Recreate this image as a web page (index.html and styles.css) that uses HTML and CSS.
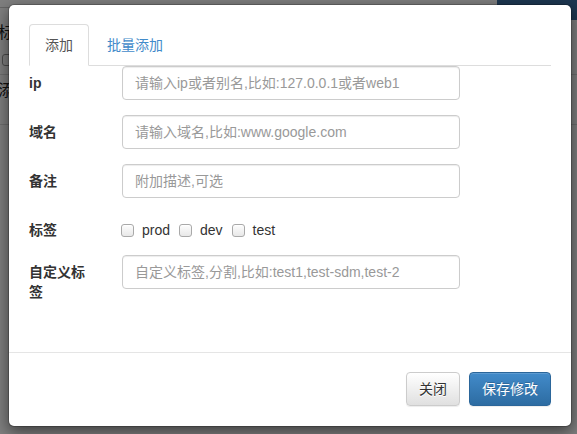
FILE: index.html
```html
<!DOCTYPE html>
<html lang="zh">
<head>
<meta charset="utf-8">
<title>添加</title>
<link rel="stylesheet" href="styles.css">
</head>
<body>
<div class="page">
  <div class="topbar"><span class="topbtn"></span></div>
  <div class="pagerow first pagetext">标签</div>
  <div class="pagerow boxrow"><span class="pagebox"></span></div>
  <div class="pageline"></div>
  <div class="pagerow third pagetext">添加</div>
  <div class="pageline second"></div>
</div>
<div class="backdrop"></div>
<div class="modal">
  <div class="modal-body">
    <ul class="tabs">
      <li class="tab active">添加</li>
      <li class="tab link">批量添加</li>
    </ul>
    <form class="form">
      <label class="label">ip</label>
      <input class="input" type="text" placeholder="请输入ip或者别名,比如:127.0.0.1或者web1">
      <label class="label">域名</label>
      <input class="input" type="text" placeholder="请输入域名,比如:www.google.com">
      <label class="label">备注</label>
      <input class="input" type="text" placeholder="附加描述,可选">
      <label class="label">标签</label>
      <div class="checks">
        <label class="check"><input class="cb" type="checkbox"><span>prod</span></label>
        <label class="check"><input class="cb" type="checkbox"><span>dev</span></label>
        <label class="check"><input class="cb" type="checkbox"><span>test</span></label>
      </div>
      <label class="label">自定义标签</label>
      <input class="input" type="text" placeholder="自定义标签,分割,比如:test1,test-sdm,test-2">
    </form>
  </div>
  <div class="modal-footer">
    <button class="btn btn-default" type="button">关闭</button>
    <button class="btn btn-primary" type="button">保存修改</button>
  </div>
</div>
</body>
</html>
```
FILE: styles.css
```css
* { box-sizing: border-box; }
html, body { margin: 0; padding: 0; }
body {
  width: 577px;
  height: 434px;
  overflow: hidden;
  position: relative;
  font-family: "Liberation Sans", "Noto Sans CJK SC", sans-serif;
  font-size: 14px;
  line-height: 20px;
  color: #333;
  background: #fff;
}
.page { height: 434px; background: #fff; }
.topbar { height: 8px; display: flex; justify-content: flex-end; border-bottom: 1px solid #ccc; }
.topbtn { width: 80px; height: 20px; background: #3a6fa3; }
.pagerow { height: 20px; }
.pagerow.first { margin-top: 15px; }
.pagerow.boxrow { height: 12px; margin-top: 11px; }
.pagerow.third { margin-top: 6px; }
.pagetext { color: #222; font-size: 16px; margin-left: -2px; }
.pagebox { display: block; width: 14px; height: 12px; border: 1px solid #999; border-radius: 3px; margin-left: 2px; }
.pageline { margin-top: 8px; border-top: 1px solid #ddd; }
.pageline.second { margin-top: 23px; }
.backdrop { position: absolute; inset: 0; background: rgba(0, 0, 0, 0.5); }
.modal {
  position: absolute;
  left: 8px;
  top: 4px;
  width: 564px;
  background: #fff;
  border: 1px solid rgba(0, 0, 0, 0.2);
  border-radius: 6px;
  box-shadow: 0 5px 15px rgba(0, 0, 0, 0.5);
  background-clip: padding-box;
}
.modal-body { padding: 19px 20px 50px; }
.tabs {
  list-style: none;
  margin: 0;
  padding: 0;
  display: flex;
  border-bottom: 1px solid #ddd;
}
.tab {
  padding: 10px 15px;
  line-height: 20px;
  border: 1px solid transparent;
  border-radius: 4px 4px 0 0;
  margin-right: 2px;
  margin-bottom: -1px;
}
.tab.active { border-color: #ddd #ddd transparent; background: #fff; color: #555; }
.tab.link { color: #428bca; }
.form {
  display: grid;
  grid-template-columns: 62px 338px;
  column-gap: 31px;
  row-gap: 15px;
  align-items: start;
}
.label { padding-top: 7px; font-weight: bold; line-height: 20px; color: #333; }
.input {
  display: block;
  width: 338px;
  height: 34px;
  padding: 6px 12px;
  font: inherit;
  font-size: 14px;
  line-height: 20px;
  color: #555;
  background: #fff;
  border: 1px solid #ccc;
  border-radius: 4px;
  box-shadow: inset 0 1px 1px rgba(0, 0, 0, 0.075);
  outline: none;
}
.input::placeholder { color: #999; }
.checks { display: flex; align-items: center; height: 27px; padding-top: 7px; }
.check { display: flex; align-items: center; line-height: 20px; margin-right: 10px; font-weight: normal; }
.cb {
  appearance: none;
  -webkit-appearance: none;
  margin: 0 8px 0 -1px;
  width: 13px;
  height: 13px;
  border: 1px solid #a9a9a9;
  border-radius: 3px;
  background: linear-gradient(#fdfdfd, #e8e8e8);
  box-shadow: inset 0 1px 0 #fff;
}
.modal-footer {
  border-top: 1px solid #e5e5e5;
  padding: 19px 20px 20px;
  display: flex;
  justify-content: flex-end;
  gap: 9px;
}
.btn {
  height: 34px;
  padding: 6px 12px;
  font: inherit;
  font-size: 14px;
  line-height: 20px;
  border: 1px solid;
  border-radius: 4px;
  cursor: pointer;
}
.btn-default {
  color: #333;
  background: linear-gradient(#fff, #e0e0e0);
  border-color: #ccc;
  text-shadow: 0 1px 0 #fff;
  box-shadow: inset 0 1px 0 rgba(255, 255, 255, 0.15), 0 1px 1px rgba(0, 0, 0, 0.075);
}
.btn-primary {
  color: #fff;
  background: linear-gradient(#428bca, #2d6ca2);
  border-color: #2b669a;
  text-shadow: 0 -1px 0 rgba(0, 0, 0, 0.2);
  box-shadow: inset 0 1px 0 rgba(255, 255, 255, 0.15), 0 1px 1px rgba(0, 0, 0, 0.075);
}
```
